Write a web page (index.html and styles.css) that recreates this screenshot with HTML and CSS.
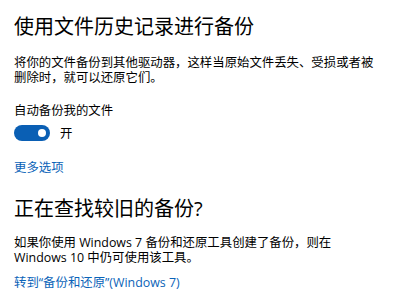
FILE: index.html
```html
<!DOCTYPE html>
<html lang="zh-CN">
<head>
  <meta charset="UTF-8">
  <title>文件历史记录</title>
  <link rel="stylesheet" href="styles.css">
</head>
<body>
  <div class="page">
    <h1>使用文件历史记录进行备份</h1>
    <p class="desc">将你的文件备份到其他驱动器，这样当原始文件丢失、受损或者被删除时，就可以还原它们。</p>

    <div class="label">自动备份我的文件</div>
    <div class="toggle-row">
      <span class="toggle on"><span class="knob"></span></span>
      <span class="toggle-text">开</span>
    </div>

    <a class="link more" href="#">更多选项</a>

    <h1 class="second">正在查找较旧的备份?</h1>
    <p class="desc desc2">如果你使用 Windows 7 备份和还原工具创建了备份，则在 Windows 10 中仍可使用该工具。</p>
    <a class="link restore" href="#">转到“备份和还原”(Windows 7)</a>
  </div>
</body>
</html>
```

FILE: styles.css
```css
body {
  margin: 0;
  background: #fff;
  color: #000;
  font-family: "Open Sans", "Noto Sans CJK SC", sans-serif;
}
.page {
  padding: 14px 14px 0 14px;
  width: 370px;
}
h1 {
  font-size: 20px;
  font-weight: 400;
  line-height: 25px;
  margin: 0;
}
h1.second {
  margin-top: 21.5px;
}
.desc {
  font-size: 12.4px;
  line-height: 15px;
  margin: 15.5px 0 0 0;
}
.desc.desc2 {
  margin-top: 13.5px;
}
.label {
  font-size: 12.4px;
  line-height: 15px;
  margin-top: 18px;
}
.toggle-row {
  display: flex;
  align-items: center;
  gap: 10px;
  height: 20px;
  margin-top: 5.5px;
}
.toggle {
  width: 36px;
  height: 16px;
  border-radius: 8px;
  background: #0a5fb4;
  display: flex;
  align-items: center;
  justify-content: flex-end;
  box-sizing: border-box;
  padding-right: 4px;
}
.toggle .knob {
  width: 8px;
  height: 8px;
  border-radius: 50%;
  background: #fff;
}
.toggle-text {
  font-size: 12.4px;
  line-height: 15px;
}
.link {
  display: block;
  color: #0a63b8;
  text-decoration: none;
  font-size: 12.4px;
  line-height: 15px;
}
.link.more {
  margin-top: 16.5px;
}
.link.restore {
  margin-top: 10px;
}
```
